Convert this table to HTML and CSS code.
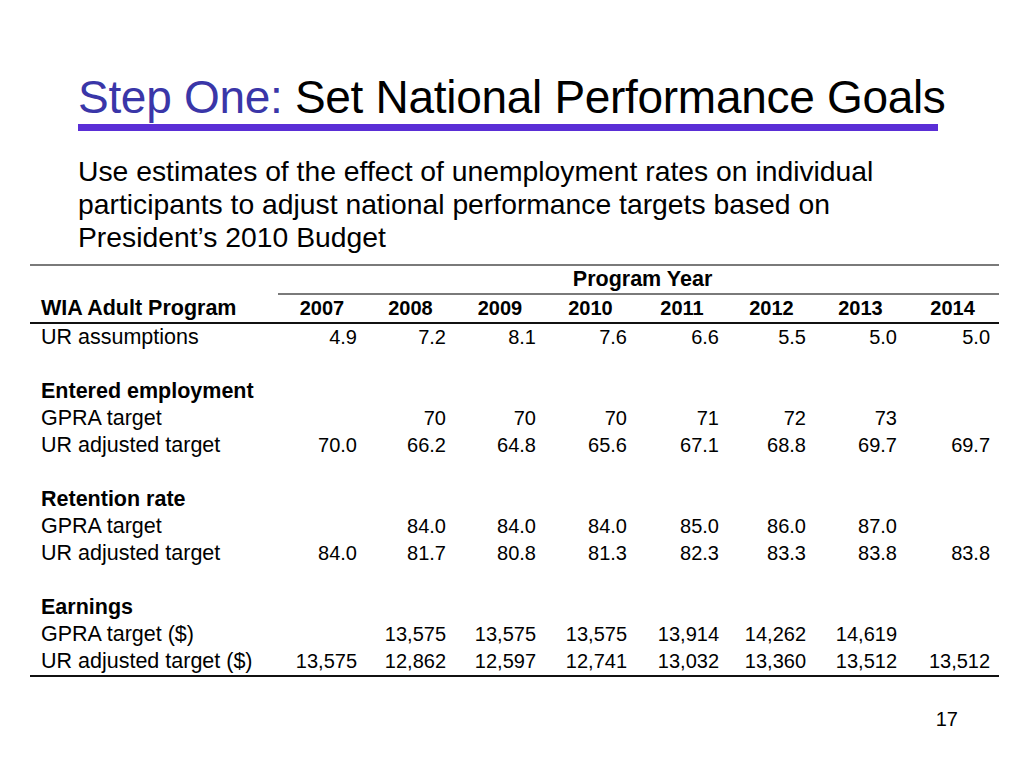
FILE: index.html
```html
<!DOCTYPE html>
<html>
<head>
<meta charset="utf-8">
<link rel="stylesheet" href="styles.css">
</head>
<body>
<div class="slide">
  <h1 class="title"><span class="step">Step One:</span> Set National Performance Goals</h1>
  <div class="bar"></div>
  <p class="lead">Use estimates of the effect of unemployment rates on individual<br>participants to adjust national performance targets based on<br>President’s 2010 Budget</p>
  <table class="data">
    <colgroup>
      <col class="c0"><col class="c1"><col class="c2"><col class="c3"><col class="c4"><col class="c5"><col class="c6"><col class="c7"><col class="c8">
    </colgroup>
    <thead>
      <tr class="r-group"><th></th><th colspan="8" class="group">Program Year</th></tr>
      <tr class="r-head"><th class="label">WIA Adult Program</th><th>2007</th><th>2008</th><th>2009</th><th>2010</th><th>2011</th><th>2012</th><th>2013</th><th>2014</th></tr>
    </thead>
    <tbody>
      <tr><td class="label">UR assumptions</td><td>4.9</td><td>7.2</td><td>8.1</td><td>7.6</td><td>6.6</td><td>5.5</td><td>5.0</td><td>5.0</td></tr>
      <tr><td class="label"></td><td></td><td></td><td></td><td></td><td></td><td></td><td></td><td></td></tr>
      <tr><td class="label sec">Entered employment</td><td></td><td></td><td></td><td></td><td></td><td></td><td></td><td></td></tr>
      <tr><td class="label">GPRA target</td><td></td><td>70</td><td>70</td><td>70</td><td>71</td><td>72</td><td>73</td><td></td></tr>
      <tr><td class="label">UR adjusted target</td><td>70.0</td><td>66.2</td><td>64.8</td><td>65.6</td><td>67.1</td><td>68.8</td><td>69.7</td><td>69.7</td></tr>
      <tr><td class="label"></td><td></td><td></td><td></td><td></td><td></td><td></td><td></td><td></td></tr>
      <tr><td class="label sec">Retention rate</td><td></td><td></td><td></td><td></td><td></td><td></td><td></td><td></td></tr>
      <tr><td class="label">GPRA target</td><td></td><td>84.0</td><td>84.0</td><td>84.0</td><td>85.0</td><td>86.0</td><td>87.0</td><td></td></tr>
      <tr><td class="label">UR adjusted target</td><td>84.0</td><td>81.7</td><td>80.8</td><td>81.3</td><td>82.3</td><td>83.3</td><td>83.8</td><td>83.8</td></tr>
      <tr><td class="label"></td><td></td><td></td><td></td><td></td><td></td><td></td><td></td><td></td></tr>
      <tr><td class="label sec">Earnings</td><td></td><td></td><td></td><td></td><td></td><td></td><td></td><td></td></tr>
      <tr><td class="label">GPRA target ($)</td><td></td><td>13,575</td><td>13,575</td><td>13,575</td><td>13,914</td><td>14,262</td><td>14,619</td><td></td></tr>
      <tr class="last"><td class="label">UR adjusted target ($)</td><td>13,575</td><td>12,862</td><td>12,597</td><td>12,741</td><td>13,032</td><td>13,360</td><td>13,512</td><td>13,512</td></tr>
    </tbody>
  </table>
  <div class="pageno">17</div>
</div>
</body>
</html>
```
FILE: styles.css
```css
html, body {
  margin: 0;
  padding: 0;
  background: #ffffff;
}
.slide {
  width: 1024px;
  height: 768px;
  display: flex;
  flex-direction: column;
  font-family: "Liberation Sans", Arial, Helvetica, sans-serif;
  color: #000000;
  overflow: hidden;
}
.title {
  margin: 71px 0 0 78px;
  font-size: 46px;
  line-height: 52px;
  font-weight: normal;
  letter-spacing: -0.3px;
  white-space: nowrap;
}
.step {
  color: #3a36a8;
}
.bar {
  margin: 1px 0 0 78px;
  width: 860px;
  height: 7px;
  background: #5a2ed6;
}
.lead {
  margin: 24px 0 0 78px;
  font-size: 28.3px;
  line-height: 33px;
}
.data {
  margin: 10px 0 0 30px;
  width: 969px;
  border-collapse: collapse;
  table-layout: fixed;
  font-size: 20px;
}
.c0 { width: 248px; }
.c1 { width: 88px; }
.c2 { width: 89px; }
.c3 { width: 90px; }
.c4 { width: 91px; }
.c5 { width: 92px; }
.c6 { width: 87px; }
.c7 { width: 91px; }
.c8 { width: 93px; }
.data th, .data td {
  padding: 0 9px 0 0;
  height: 27px;
  line-height: 27px;
  white-space: nowrap;
  text-align: right;
}
.data th {
  font-weight: bold;
  text-align: center;
  padding: 0;
}
.data .group {
  font-size: 21.5px;
  padding-left: 8px;
}
.r-group th {
  border-top: 2px solid #7a7a7a;
}
.r-head th {
  border-bottom: 2px solid #111111;
}
.r-head th:not(.label) {
  border-top: 2px solid #7a7a7a;
}
.data .label {
  text-align: left;
  padding-left: 11px;
  font-size: 21.5px;
}
.data .sec {
  font-weight: bold;
}
.last td {
  border-bottom: 2px solid #111111;
}
.pageno {
  margin: auto 66px 38px 0;
  text-align: right;
  font-size: 20px;
  line-height: 22px;
}
```
